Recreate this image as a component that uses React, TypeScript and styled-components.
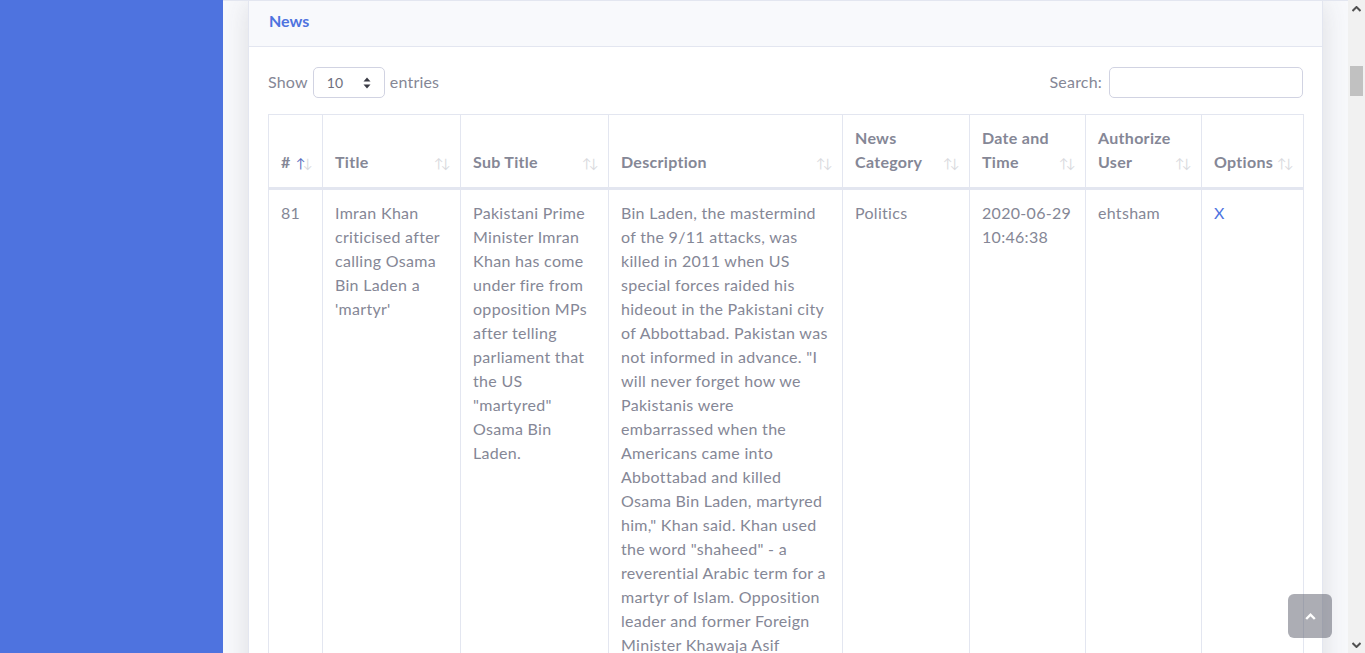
import React from "react";
import styled, { createGlobalStyle } from "styled-components";

const GlobalStyle = createGlobalStyle`
  html, body {
    margin: 0;
    height: 100%;
    overflow: hidden;
  }
  body {
    font-family: Lato, "Noto Sans", sans-serif;
    font-size: 16px;
    line-height: 1.5;
    color: #858796;
    background: #f8f9fc;
  }
  * {
    box-sizing: border-box;
  }
`;

interface Column {
  label: React.ReactNode;
  width: number;
  active?: boolean;
}

const columns: Column[] = [
  { label: "#", width: 54, active: true },
  { label: "Title", width: 138 },
  { label: "Sub Title", width: 148 },
  { label: "Description", width: 234 },
  { label: "News Category", width: 127 },
  { label: "Date and Time", width: 116 },
  { label: "Authorize User", width: 116 },
  { label: "Options", width: 102 },
];

const row = {
  id: "81",
  title: "Imran Khan criticised after calling Osama Bin Laden a 'martyr'",
  subTitle:
    'Pakistani Prime Minister Imran Khan has come under fire from opposition MPs after telling parliament that the US "martyred" Osama Bin Laden.',
  description:
    'Bin Laden, the mastermind of the 9/11 attacks, was killed in 2011 when US special forces raided his hideout in the Pakistani city of Abbottabad. Pakistan was not informed in advance. "I will never forget how we Pakistanis were embarrassed when the Americans came into Abbottabad and killed Osama Bin Laden, martyred him," Khan said. Khan used the word "shaheed" - a reverential Arabic term for a martyr of Islam. Opposition leader and former Foreign Minister Khawaja Asif criticised the remarks.',
  category: "Politics",
  date: "2020-06-29 10:46:38",
  user: "ehtsham",
};

const App: React.FC = () => {
  return (
    <>
      <GlobalStyle />
      <Wrapper>
        <Sidebar />
        <Content>
          <Card>
            <CardHeader>
              <CardTitle>News</CardTitle>
            </CardHeader>
            <CardBody>
              <Controls>
                <ControlLabel>
                  Show
                  <SelectBox>
                    <span>10</span>
                    <svg width="8" height="12" viewBox="0 0 8 12">
                      <path d="M4 0.5 L7.5 4.5 H0.5 Z" fill="#3a3b45" />
                      <path d="M4 11.5 L7.5 7.5 H0.5 Z" fill="#3a3b45" />
                    </svg>
                  </SelectBox>
                  entries
                </ControlLabel>
                <ControlLabel>
                  Search:
                  <SearchInput type="search" />
                </ControlLabel>
              </Controls>
              <Table>
                <colgroup>
                  {columns.map((c, i) => (
                    <col key={i} style={{ width: c.width }} />
                  ))}
                </colgroup>
                <thead>
                  <tr>
                    {columns.map((c, i) => (
                      <Th key={i} $active={c.active}>
                        {c.label}
                      </Th>
                    ))}
                  </tr>
                </thead>
                <tbody>
                  <tr>
                    <Td>{row.id}</Td>
                    <Td>{row.title}</Td>
                    <Td>{row.subTitle}</Td>
                    <Td>{row.description}</Td>
                    <Td>{row.category}</Td>
                    <Td>{row.date}</Td>
                    <Td>{row.user}</Td>
                    <Td>
                      <DeleteLink href="#">X</DeleteLink>
                    </Td>
                  </tr>
                </tbody>
              </Table>
            </CardBody>
          </Card>
        </Content>
        <Scrollbar>
          <ScrollArrow>
            <svg width="9" height="6" viewBox="0 0 9 6">
              <path d="M0.5 5 L4.5 1 L8.5 5" stroke="#505050" strokeWidth="2" fill="none" />
            </svg>
          </ScrollArrow>
          <ScrollTrack>
            <ScrollThumb />
          </ScrollTrack>
          <ScrollArrow>
            <svg width="9" height="6" viewBox="0 0 9 6">
              <path d="M0.5 1 L4.5 5 L8.5 1" stroke="#505050" strokeWidth="2" fill="none" />
            </svg>
          </ScrollArrow>
        </Scrollbar>
        <ScrollTop href="#">
          <svg width="11" height="7" viewBox="0 0 11 7">
            <path d="M1.2 6 L5.5 1.7 L9.8 6" stroke="#fff" strokeWidth="2.4" fill="none" />
          </svg>
        </ScrollTop>
      </Wrapper>
    </>
  );
};

export default App;

const Wrapper = styled.div`
  display: flex;
  height: 100vh;
  overflow: hidden;
`;

const Sidebar = styled.div`
  width: 223px;
  flex-shrink: 0;
  background: #4e73df;
`;

const Content = styled.div`
  flex: 1;
  min-width: 0;
  padding: 0 25px;
  background: #f8f9fc;
  border-top: 1px solid #e3e6f0;
  overflow: hidden;
`;

const Card = styled.div`
  background: #fff;
  border: 1px solid #e3e6f0;
  border-top: none;
  border-radius: 0 0 5px 5px;
  box-shadow: 0 2px 28px 0 rgba(58, 59, 69, 0.15);
`;

const CardHeader = styled.div`
  height: 46px;
  padding: 0 20px;
  display: flex;
  align-items: center;
  background: #f8f9fc;
  border-bottom: 1px solid #e3e6f0;
`;

const CardTitle = styled.h6`
  margin: -6px 0 0;
  font-size: 16px;
  font-weight: 700;
  color: #4e73df;
`;

const CardBody = styled.div`
  padding: 19px 19px 20px;
`;

const Controls = styled.div`
  display: flex;
  justify-content: space-between;
  align-items: center;
  height: 31px;
  margin-bottom: 17px;
`;

const ControlLabel = styled.label`
  display: flex;
  align-items: center;
  gap: 5px;
  font-size: 16px;
  letter-spacing: 0.2px;
  color: #858796;

  & > * {
    margin-top: 2px;
  }
`;

const SelectBox = styled.div`
  width: 72px;
  height: 31px;
  display: flex;
  align-items: center;
  justify-content: space-between;
  padding: 0 13px 0 13px;
  border: 1px solid #d1d3e2;
  border-radius: 5px;
  font-size: 14px;
  color: #6e707e;
`;

const SearchInput = styled.input`
  width: 194px;
  height: 31px;
  margin-left: 2px;
  border: 1px solid #d1d3e2;
  border-radius: 5px;
  outline: none;
`;

const Table = styled.table`
  width: 100%;
  table-layout: fixed;
  border-collapse: collapse;
  border: 1px solid #e3e6f0;
  letter-spacing: 0.3px;
`;

const Th = styled.th<{ $active?: boolean }>`
  position: relative;
  padding: 11px 30px 13px 12px;
  text-align: left;
  vertical-align: bottom;
  font-weight: 700;
  color: #858796;
  border: 1px solid #e3e6f0;
  border-bottom: 3px solid #e3e6f0;
  height: 74px;

  &::before,
  &::after {
    position: absolute;
    bottom: 17px;
    font-size: 13px;
    font-weight: 400;
    line-height: 1;
    color: #858796;
    opacity: 0.3;
  }
  &::before {
    content: "↑";
    right: 16px;
    ${(p) => (p.$active ? "opacity: 1; color: #5a6cc0;" : "")}
  }
  &::after {
    content: "↓";
    right: 9px;
  }
`;

const Td = styled.td`
  padding: 11px 12px 12px;
  vertical-align: top;
  border: 1px solid #e3e6f0;
  color: #858796;
`;

const DeleteLink = styled.a`
  color: #4e73df;
  text-decoration: none;
`;

const Scrollbar = styled.div`
  width: 17px;
  flex-shrink: 0;
  display: flex;
  flex-direction: column;
  background: #f1f1f1;
`;

const ScrollArrow = styled.div`
  height: 17px;
  display: flex;
  align-items: center;
  justify-content: center;
`;

const ScrollTrack = styled.div`
  flex: 1;
  padding-top: 49px;
`;

const ScrollThumb = styled.div`
  width: 13px;
  height: 30px;
  margin: 0 auto;
  background: #c1c1c1;
`;

const ScrollTop = styled.a`
  position: fixed;
  right: 33px;
  bottom: 15px;
  width: 44px;
  height: 44px;
  display: flex;
  align-items: center;
  justify-content: center;
  border-radius: 6px;
  background: rgba(90, 92, 105, 0.5);
`;
